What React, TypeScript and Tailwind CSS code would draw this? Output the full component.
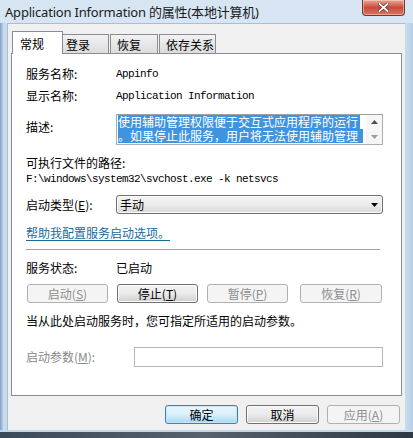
import React from "react";

const cjk = "font-['Noto_Sans_CJK_SC',sans-serif]";

function Btn({
  children,
  w,
  kind = "normal",
  className = "",
}: {
  children: React.ReactNode;
  w: string;
  kind?: "normal" | "disabled" | "default";
  className?: string;
}) {
  const styles =
    kind === "disabled"
      ? "border-[#adb2b5] bg-[#f4f4f4] text-[#8d8d8d]"
      : kind === "default"
      ? "border-[#3c7fb1] bg-gradient-to-b from-[#eaf6fd] via-[#d9f0fc] to-[#a7d9f5] text-black shadow-[inset_0_0_0_1px_#c6e6f8]"
      : "border-[#707070] bg-gradient-to-b from-[#f2f2f2] via-[#ebebeb] to-[#cfcfcf] text-black shadow-[inset_0_0_0_1px_#fcfcfc]";
  return (
    <div
      className={`${w} h-[19px] shrink-0 rounded-[3px] border flex items-center justify-center text-[12px] leading-[16px] ${cjk} ${styles} ${className}`}
    >
      {children}
    </div>
  );
}

function Row({
  label,
  children,
  className = "",
  labelW = "w-[90px]",
}: {
  label: React.ReactNode;
  children?: React.ReactNode;
  className?: string;
  labelW?: string;
}) {
  return (
    <div className={`flex items-center h-[16px] ${className}`}>
      <div className={`${labelW} shrink-0 text-[12px] leading-[16px] text-black ${cjk}`}>{label}</div>
      {children}
    </div>
  );
}

export default function App() {
  return (
    <div className="w-[413px] h-[438px] overflow-hidden bg-gradient-to-b from-[#d8e6f4] via-[#c8dbee] to-[#bcd2ea] relative select-none">
      {/* title bar */}
      <div className="h-[23px] flex items-center pl-[5px]">
        <span className="text-[13px] leading-[16px] text-[#1b1b1b] font-['Noto_Sans','Noto_Sans_CJK_SC',sans-serif] tracking-[-0.2px]">
          Application Information 的属性(本地计算机)
        </span>
      </div>
      {/* close button */}
      <div className="absolute left-[362px] top-0 w-[43px] h-[16px] rounded-b-[4px] border border-t-0 border-[#6e3a34] bg-gradient-to-b from-[#e6a898] via-[#c9493c] to-[#d8775f] flex items-center justify-center shadow-[inset_0_0_0_1px_rgba(255,220,210,0.5)]">
        <svg width="11" height="9" viewBox="0 0 11 9">
          <path d="M1.5 1 L9.5 8 M9.5 1 L1.5 8" stroke="#5a2a24" strokeWidth="3" strokeLinecap="square" />
          <path d="M1.5 1 L9.5 8 M9.5 1 L1.5 8" stroke="#ffffff" strokeWidth="1.8" strokeLinecap="square" />
        </svg>
      </div>

      <div className="flex">
        <div className="w-[7px] h-[407px] shrink-0 bg-gradient-to-r from-[#7f9fc2] via-[#c6d9ee] to-[#c9dcee]" />
        {/* client */}
        <div className="w-[398px] h-[407px] shrink-0 bg-[#f0f0f0] pt-[7px] pl-[3px] pr-[5px] border-l border-t border-[#a9bdd3]">
          {/* tabs */}
          <div className="flex items-end h-[23px] -mb-px relative z-10 pl-[1px]">
            <div className={`w-[51px] h-[23px] border border-b-0 border-[#898c95] bg-white pl-[7px] pt-[5px] text-[12px] leading-[14px] text-black ${cjk}`}>
              常规
            </div>
            <div className={`w-[46px] h-[19px] mb-px border border-b-0 border-l-0 border-[#898c95] bg-gradient-to-b from-[#f2f2f2] to-[#dcdcdc] pl-[3px] pt-[3px] text-[12px] leading-[14px] text-black ${cjk}`}>
              登录
            </div>
            <div className={`w-[48px] h-[19px] mb-px ml-px border border-b-0 border-[#898c95] bg-gradient-to-b from-[#f2f2f2] to-[#dcdcdc] pl-[6px] pt-[3px] text-[12px] leading-[14px] text-black ${cjk}`}>
              恢复
            </div>
            <div className={`w-[57px] h-[19px] mb-px ml-px border border-b-0 border-[#898c95] bg-gradient-to-b from-[#f2f2f2] to-[#dcdcdc] pl-[6px] pt-[3px] text-[12px] leading-[14px] text-black ${cjk}`}>
              依存关系
            </div>
          </div>

          {/* panel */}
          <div className="w-[391px] h-[343px] border border-[#898c95] bg-white pl-[14px]">
            <Row label="服务名称:" className="mt-[12px]">
              <span className="text-[11px] leading-[16px] tracking-[-0.6px] font-['Liberation_Mono',monospace] text-black">Appinfo</span>
            </Row>
            <Row label="显示名称:" className="mt-[6px]">
              <span className="text-[11px] leading-[16px] tracking-[-0.6px] font-['Liberation_Mono',monospace] text-black">Application Information</span>
            </Row>

            {/* description */}
            <div className="flex items-start mt-[10px]">
              <div className={`w-[90px] shrink-0 mt-[5px] text-[12px] leading-[16px] text-black ${cjk}`}>描述:</div>
              <div className="w-[267px] h-[31px] border border-[#abadb3] border-t-[#9ea0a8] bg-white flex">
                <div className={`w-[249px] pl-[1px] text-[12px] leading-[14px] text-white ${cjk}`}>
                  <div className="h-[14px]">
                    <span className="bg-[#3f94e0] inline-block w-[242px] h-[14px] whitespace-nowrap">使用辅助管理权限便于交互式应用程序的运行</span>
                  </div>
                  <div className="h-[14px]">
                    <span className="bg-[#3f94e0] inline-block w-[245px] h-[14px] whitespace-nowrap">。如果停止此服务，用户将无法使用辅助管理</span>
                  </div>
                </div>
                <div className="ml-auto w-[16px] h-full bg-[#f6f6f6] flex flex-col items-center justify-between py-[5px]">
                  <svg width="7" height="4" viewBox="0 0 7 4">
                    <path d="M0 4 L3.5 0 L7 4 Z" fill="#4d4d4d" />
                  </svg>
                  <svg width="7" height="4" viewBox="0 0 7 4">
                    <path d="M0 0 L3.5 4 L7 0 Z" fill="#9a9a9a" />
                  </svg>
                </div>
              </div>
            </div>

            <div className={`mt-[10px] h-[16px] text-[12px] leading-[16px] text-black ${cjk}`}>可执行文件的路径:</div>
            <div className="h-[16px] text-[11px] leading-[16px] tracking-[-0.6px] font-['Liberation_Mono',monospace] text-black whitespace-nowrap">
              F:\windows\system32\svchost.exe -k netsvcs
            </div>

            {/* startup type */}
            <div className="flex items-center mt-[8px] h-[19px]">
              <div className={`w-[90px] shrink-0 text-[12px] leading-[16px] text-black ${cjk}`}>
                启动类型(<u>E</u>):
              </div>
              <div className="w-[267px] h-[19px] rounded-[3px] border border-[#707070] bg-gradient-to-b from-[#f3f3f3] via-[#ebebeb] to-[#d9d9d9] flex items-center justify-between pl-[3px] pr-[4px] shadow-[inset_0_0_0_1px_#fbfbfb]">
                <span className={`text-[12px] leading-[16px] text-black ${cjk}`}>手动</span>
                <svg width="7" height="4" viewBox="0 0 7 4">
                  <path d="M0 0 L7 0 L3.5 4 Z" fill="#000" />
                </svg>
              </div>
            </div>

            <div className={`mt-[11px] h-[16px] text-[12px] leading-[16px] text-[#1a6a9c] underline underline-offset-2 ${cjk}`}>
              帮助我配置服务启动选项。
            </div>

            <div className="mt-[8px] w-[354px] h-[2px] border-t border-[#a0a0a0] border-b border-b-white" />

            <Row label="服务状态:" className="mt-[9px]">
              <span className={`text-[12px] leading-[16px] text-black ${cjk}`}>已启动</span>
            </Row>

            <div className="flex mt-[8px] pl-[1px]">
              <Btn w="w-[81px]" kind="disabled">启动(<u>S</u>)</Btn>
              <Btn w="w-[81px]" className="ml-[9px]">停止(<u>T</u>)</Btn>
              <Btn w="w-[81px]" kind="disabled" className="ml-[9px]">暂停(<u>P</u>)</Btn>
              <Btn w="w-[82px]" kind="disabled" className="ml-[12px]">恢复(<u>R</u>)</Btn>
            </div>

            <div className={`mt-[10px] h-[16px] text-[12px] leading-[16px] text-black ${cjk}`}>
              当从此处启动服务时，您可指定所适用的启动参数。
            </div>

            <div className="flex items-center mt-[18px] h-[20px]">
              <div className={`w-[108px] shrink-0 text-[12px] leading-[16px] text-[#8a8a8a] ${cjk}`}>
                启动参数(<u>M</u>):
              </div>
              <div className="w-[249px] h-[20px] border border-[#b5b7bd] bg-white" />
            </div>
          </div>

          {/* bottom buttons */}
          <div className="flex justify-end mt-[9px]">
            <Btn w="w-[73px]" kind="default">确定</Btn>
            <Btn w="w-[73px]" className="ml-[8px]">取消</Btn>
            <Btn w="w-[73px]" kind="disabled" className="ml-[8px]">应用(<u>A</u>)</Btn>
          </div>
        </div>
        <div className="w-[8px] h-[407px] shrink-0 bg-gradient-to-r from-[#c9dcee] to-[#b9cfe6]" />
      </div>
      {/* bottom frame */}
      <div className="h-[2px] bg-[#c3d6eb]" />
      <div className="h-[6px] bg-gradient-to-r from-[#3b4a5a] via-[#56616c] to-[#2d3844]" />
    </div>
  );
}
